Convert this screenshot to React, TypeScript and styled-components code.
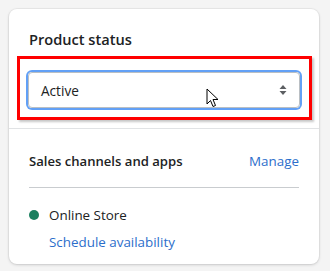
import React from "react";
import styled, { createGlobalStyle } from "styled-components";

const GlobalStyle = createGlobalStyle`
  body {
    margin: 0;
    background: #f4f4f4;
    font-family: "Open Sans", "Noto Sans", sans-serif;
    color: #202223;
  }
`;

const Card = styled.div`
  margin: 9px;
  width: 310px;
  background: #ffffff;
  border-radius: 8px;
  box-shadow: 0 0 0 1px rgba(63, 63, 68, 0.05), 0 1px 3px 0 rgba(63, 63, 68, 0.2);
`;

const Section = styled.div<{ $top: number; $bottom: number; $divided?: boolean }>`
  padding: ${(p) => p.$top}px 20px ${(p) => p.$bottom}px;
  border-bottom: ${(p) => (p.$divided ? "1px solid #e1e3e5" : "none")};
`;

const Title = styled.h2`
  margin: 0;
  font-size: 14.6px;
  line-height: 20px;
  font-weight: 600;
`;

const Highlight = styled.div`
  margin: 7px -13px 0 -12px;
  padding: 13px 9px 9px 8px;
  border: 3px solid #ff0000;
  box-shadow: 2px 2px 2px rgba(0, 0, 0, 0.22);
  position: relative;
`;

const SelectBox = styled.div`
  height: 36px;
  box-sizing: border-box;
  display: flex;
  align-items: center;
  justify-content: space-between;
  padding: 0 12px;
  border: 1px solid #babfc3;
  border-radius: 4px;
  box-shadow: 0 0 0 2px #62a0f6;
  font-size: 13.6px;
  color: #202223;
`;

const Cursor = styled.svg`
  position: absolute;
  left: 186px;
  top: 29px;
`;

const Row = styled.div`
  display: flex;
  align-items: center;
  justify-content: space-between;
  line-height: 20px;
`;

const Subtitle = styled.span`
  font-size: 13.1px;
  font-weight: 600;
`;

const Link = styled.a`
  color: #2c6ecb;
  text-decoration: none;
  font-size: 13.4px;
  line-height: 20px;
`;

const Divider = styled.hr`
  margin: 16px 0 17px;
  border: none;
  border-top: 1px solid #c9cccf;
`;

const Channel = styled.div`
  display: flex;
  align-items: center;
  gap: 10px;
  font-size: 13.4px;
  line-height: 20px;
`;

const Dot = styled.span`
  width: 10px;
  height: 10px;
  border-radius: 50%;
  background: #1a7f5f;
`;

const Indented = styled.div`
  padding-left: 20px;
  margin-top: 5px;
`;

export default function App() {
  return (
    <>
      <GlobalStyle />
      <Card>
        <Section $top={20} $bottom={8} $divided>
          <Title>Product status</Title>
          <Highlight>
            <SelectBox>
              <span>Active</span>
              <svg width="8" height="12" viewBox="0 0 8 12">
                <path d="M4 1 L7.5 5 H0.5 Z M4 11 L0.5 7 H7.5 Z" fill="#5c5f62" />
              </svg>
            </SelectBox>
            <Cursor width="14" height="21" viewBox="0 0 14 21">
              <path
                d="M1 1 L1 16 L4.5 12.5 L7 18.5 L9.5 17.5 L7 11.5 L12 11.5 Z"
                fill="#ffffff"
                stroke="#000000"
                strokeWidth="1"
                strokeLinejoin="miter"
              />
            </Cursor>
          </Highlight>
        </Section>
        <Section $top={22} $bottom={12}>
          <Row>
            <Subtitle>Sales channels and apps</Subtitle>
            <Link href="#">Manage</Link>
          </Row>
          <Divider />
          <Channel>
            <Dot />
            <span>Online Store</span>
          </Channel>
          <Indented>
            <Link href="#">Schedule availability</Link>
          </Indented>
        </Section>
      </Card>
    </>
  );
}
